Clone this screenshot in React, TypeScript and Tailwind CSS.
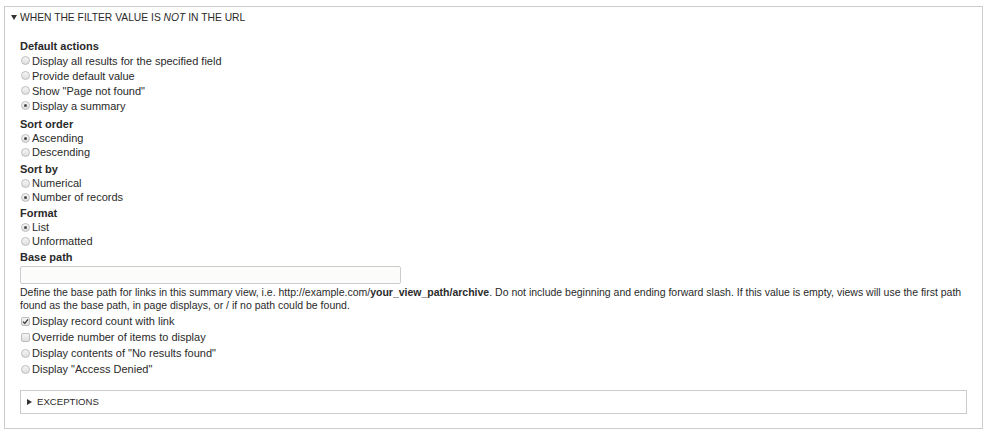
import React from "react";

function Radio({ checked, label, h = "h-[14px]" }: { checked?: boolean; label: string; h?: string }) {
  return (
    <div className={`flex items-center ${h}`}>
      <span className="ml-[1px] mr-[2px] flex h-[9px] w-[9px] items-center justify-center rounded-full border border-[#bdbdbd] bg-gradient-to-b from-[#f6f6f6] to-[#dedede]">
        {checked && <span className="h-[3px] w-[3px] rounded-full bg-[#4a4a4a]" />}
      </span>
      <span className="leading-[14px]">{label}</span>
    </div>
  );
}

function Checkbox({ checked, label }: { checked?: boolean; label: string }) {
  return (
    <div className="flex h-[16px] items-center">
      <span className="ml-[1px] mr-[2px] flex h-[9px] w-[9px] items-center justify-center rounded-[2px] border border-[#bdbdbd] bg-gradient-to-b from-[#f6f6f6] to-[#dedede]">
        {checked && (
          <svg width="7" height="7" viewBox="0 0 7 7">
            <path d="M1 3.6 L2.8 5.4 L6 1.4" fill="none" stroke="#333" strokeWidth="1.3" />
          </svg>
        )}
      </span>
      <span className="leading-[14px]">{label}</span>
    </div>
  );
}

function Label({ text, mt }: { text: string; mt: string }) {
  return <div className={`h-[14px] font-bold leading-[14px] ${mt}`}>{text}</div>;
}

export default function App() {
  return (
    <div
      className="min-h-[438px] w-[987px] bg-white pt-[6px] text-[11px] text-[#2a2a2a]"
      style={{ fontFamily: '"Liberation Sans", Arial, sans-serif' }}
    >
      <div className="ml-[4px] w-[979px] border border-[#cccccc] px-[15px] pb-[14px]">
        <div className="-ml-[9px] flex h-[21px] items-center text-[10.3px] uppercase leading-[21px]">
          <svg width="6" height="5" viewBox="0 0 6 5" className="mr-[3px]">
            <polygon points="0,0 6,0 3,5" fill="#333" />
          </svg>
          <span>
            When the filter value is <i>not</i> in the URL
          </span>
        </div>

        <Label text="Default actions" mt="mt-[11px]" />
        <Radio h="h-[15px]" label="Display all results for the specified field" />
        <Radio h="h-[15px]" label="Provide default value" />
        <Radio h="h-[15px]" label={'Show "Page not found"'} />
        <Radio h="h-[15px]" checked label="Display a summary" />

        <Label text="Sort order" mt="mt-[4px]" />
        <Radio checked label="Ascending" />
        <Radio label="Descending" />

        <Label text="Sort by" mt="mt-[3px]" />
        <Radio label="Numerical" />
        <Radio checked label="Number of records" />

        <Label text="Format" mt="mt-[2px]" />
        <Radio checked label="List" />
        <Radio label="Unformatted" />

        <Label text="Base path" mt="mt-[2px]" />
        <div className="mt-[2px] h-[18px] w-[381px] rounded-[2px] border border-[#cccccc] bg-[#fcfcfa]" />
        <div className="mt-[2px] whitespace-nowrap text-[10.5px] leading-[13px]">
          Define the base path for links in this summary view, i.e. http://example.com/
          <b>your_view_path/archive</b>. Do not include beginning and ending forward slash. If this value is empty, views will use the first path
          <br />
          found as the base path, in page displays, or / if no path could be found.
        </div>

        <div className="mt-[1px]">
          <Checkbox checked label="Display record count with link" />
          <Checkbox label="Override number of items to display" />
          <div className="flex h-[16px] items-center">
            <Radio label={'Display contents of "No results found"'} />
          </div>
          <div className="flex h-[16px] items-center">
            <Radio label={'Display "Access Denied"'} />
          </div>
        </div>

        <div className="mt-[13px] flex h-[24px] items-center border border-[#cccccc] pl-[6px] text-[9.6px] uppercase">
          <svg width="5" height="6" viewBox="0 0 5 6" className="mr-[5px]">
            <polygon points="0,0 5,3 0,6" fill="#333" />
          </svg>
          <span>Exceptions</span>
        </div>
      </div>
    </div>
  );
}
